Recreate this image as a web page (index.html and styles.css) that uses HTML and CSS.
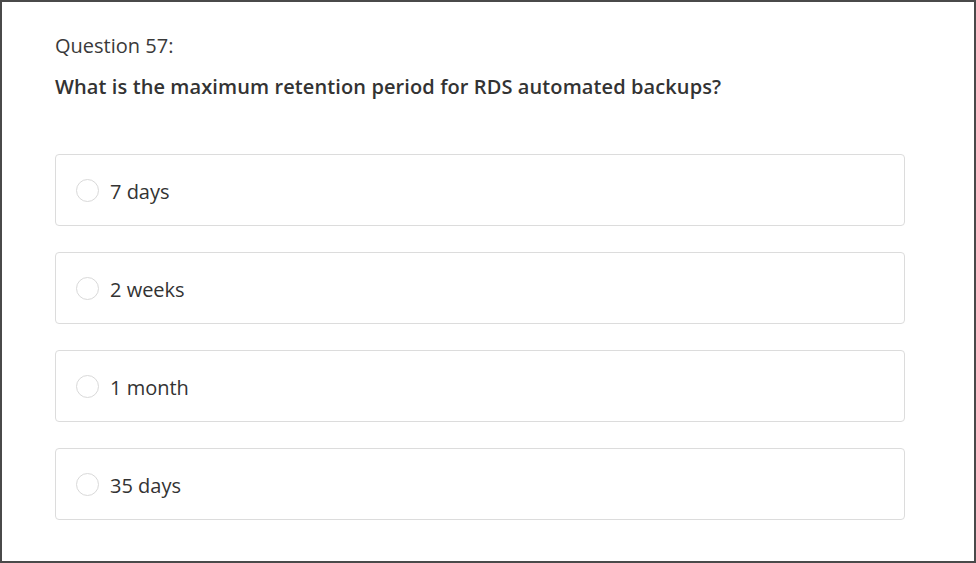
FILE: index.html
```html
<!DOCTYPE html>
<html>
<head>
<meta charset="utf-8">
<link rel="stylesheet" href="styles.css">
</head>
<body>
<div class="frame">
  <div class="quiz">
    <div class="q-label">Question 57:</div>
    <div class="q-text">What is the maximum retention period for RDS automated backups?</div>
    <ul class="options">
      <li class="option"><span class="radio"></span><span class="opt-text">7 days</span></li>
      <li class="option"><span class="radio"></span><span class="opt-text">2 weeks</span></li>
      <li class="option"><span class="radio"></span><span class="opt-text">1 month</span></li>
      <li class="option"><span class="radio"></span><span class="opt-text">35 days</span></li>
    </ul>
  </div>
</div>
</body>
</html>
```
FILE: styles.css
```css
html, body {
  margin: 0;
  padding: 0;
  background: #fff;
}
.frame {
  box-sizing: border-box;
  width: 976px;
  height: 563px;
  border: 2px solid #4a4a4a;
  padding: 30px 0 0 53px;
  font-family: "Open Sans", "Liberation Sans", sans-serif;
  color: #333;
}
.quiz {
  width: 850px;
}
.q-label {
  font-size: 20px;
  line-height: 28px;
  color: #3a3a3a;
}
.q-text {
  margin-top: 13px;
  font-size: 20px;
  line-height: 28px;
  font-weight: 600;
  letter-spacing: 0.1px;
  color: #333;
}
.options {
  list-style: none;
  margin: 53px 0 0 0;
  padding: 0;
  display: flex;
  flex-direction: column;
  gap: 26px;
}
.option {
  box-sizing: border-box;
  height: 72px;
  border: 1px solid #dcdcdc;
  border-radius: 4px;
  display: flex;
  align-items: center;
  padding-left: 20px;
}
.radio {
  box-sizing: border-box;
  width: 23px;
  height: 23px;
  border: 1px solid #d9d9d9;
  border-radius: 50%;
  margin-right: 11px;
  flex: none;
}
.opt-text {
  font-size: 20px;
  line-height: 28px;
  padding-top: 3px;
  color: #333;
}
```
